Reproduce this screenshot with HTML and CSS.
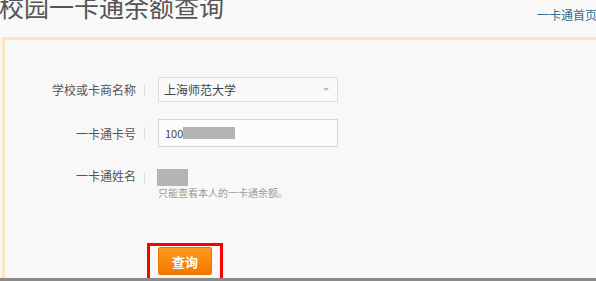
FILE: index.html
```html
<!DOCTYPE html>
<html lang="zh-CN">
<head>
  <meta charset="UTF-8" />
  <title>校园一卡通余额查询</title>
  <link rel="stylesheet" href="styles.css">
</head>
<body>
  <div class="header">
    <h1>校园一卡通余额查询</h1>
    <a class="home-link" href="#">一卡通首页</a>
  </div>

  <div class="panel">
    <form class="query-form">
      <div class="row">
        <label>学校或卡商名称</label>
        <span class="sep"></span>
        <div class="select">
          <span>上海师范大学</span>
          <i class="arrow"></i>
        </div>
      </div>

      <div class="row row-card">
        <label>一卡通卡号</label>
        <span class="sep"></span>
        <div class="input">100<span class="mask mask-card"></span></div>
      </div>

      <div class="row row-name">
        <label>一卡通姓名</label>
        <span class="sep"></span>
        <div class="field">
          <span class="mask mask-name"></span>
          <p class="hint">只能查看本人的一卡通余额。</p>
        </div>
      </div>

      <div class="btn-frame">
        <button type="submit">查询</button>
      </div>
    </form>
  </div>

  <div class="bottom-line"></div>
</body>
</html>
```

FILE: styles.css
```css
* {
  margin: 0;
  padding: 0;
  box-sizing: border-box;
}

body {
  height: 281px;
  overflow: hidden;
  background: #f8f8f8;
  font-family: "Noto Sans CJK SC", "Noto Sans", sans-serif;
  color: #555;
}

.header {
  display: flex;
  justify-content: space-between;
  align-items: flex-start;
  height: 37px;
}

.header h1 {
  margin: -6px 0 0 -1px;
  font-size: 25px;
  line-height: 25px;
  font-weight: normal;
  color: #555;
}

.home-link {
  margin: 9px -1px 0 0;
  font-size: 12px;
  line-height: 12px;
  color: #3b6b8f;
  text-decoration: none;
}

.panel {
  margin-left: 2px;
  height: 300px;
  border-top: 3px solid #fce4c2;
  border-left: 3px solid #fce4c2;
  padding-top: 37px;
}

.row {
  display: flex;
  align-items: center;
  font-size: 12px;
}

.row label {
  width: 131px;
  text-align: right;
  color: #555;
}

.sep {
  width: 1px;
  height: 12px;
  margin: 0 13px 0 8px;
  background: #ddd;
}

.select {
  display: flex;
  align-items: center;
  justify-content: space-between;
  width: 180px;
  height: 25px;
  padding: 0 8px 0 5px;
  border: 1px solid #ddd;
  background: #fafafa;
  color: #444;
}

.arrow {
  width: 0;
  height: 0;
  border-left: 3px solid transparent;
  border-right: 3px solid transparent;
  border-top: 3px solid #bbb;
}

.row-card {
  margin-top: 17px;
}

.input {
  display: flex;
  align-items: center;
  width: 180px;
  height: 28px;
  padding-left: 6px;
  border: 1px solid #d6d6d6;
  background: #fcfcfc;
  color: #444;
  font-size: 11px;
}

.mask {
  display: block;
  background: #b4b4b4;
}

.mask-card {
  width: 52px;
  height: 12px;
}

.row-name {
  margin-top: 22px;
  align-items: flex-start;
}

.row-name label {
  margin-top: -2px;
}

.row-name .sep {
  margin-top: 3px;
}

.mask-name {
  width: 31px;
  height: 17px;
  margin-left: -1px;
}

.hint {
  margin-top: 1px;
  font-size: 10px;
  line-height: 12px;
  color: #999;
}

.btn-frame {
  width: 76px;
  margin: 44px 0 0 142px;
  padding: 1px 7px 10px 8px;
  border: 3px solid #f00;
}

.btn-frame button {
  display: block;
  width: 54px;
  height: 28px;
  border: 1px solid #e87800;
  border-radius: 2px;
  background: linear-gradient(#ff9a1a, #f47800);
  color: #fff;
  font-family: inherit;
  font-size: 13px;
  font-weight: bold;
  cursor: pointer;
}

.bottom-line {
  position: fixed;
  left: 0;
  right: 0;
  bottom: 0;
  height: 3px;
  background: #8a8a8a;
}
```
